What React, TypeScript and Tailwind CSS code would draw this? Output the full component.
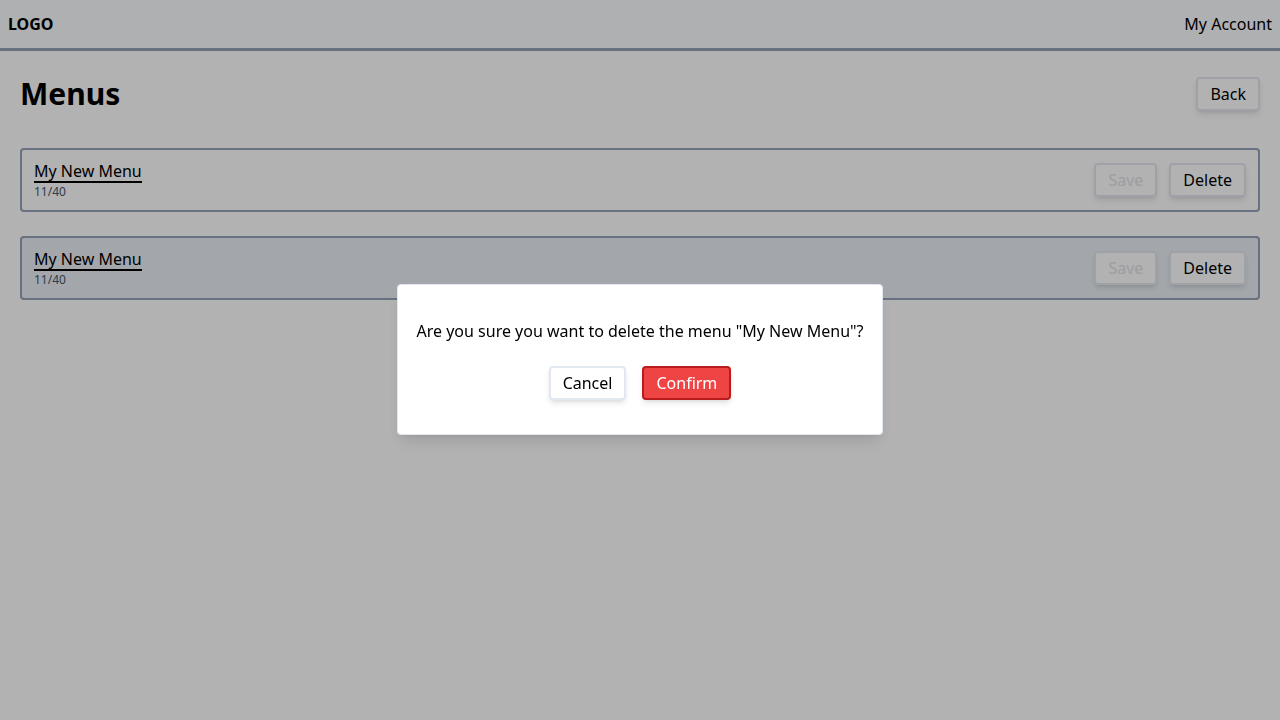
const menus = [
  { name: "My New Menu", count: "11/40", hovered: false },
  { name: "My New Menu", count: "11/40", hovered: true },
];

function Button({ children, disabled }: { children: React.ReactNode; disabled?: boolean }) {
  return (
    <button
      className={
        disabled
          ? "px-3 py-[3px] border-2 border-[#e2e8f0] rounded bg-white text-[#e0e2e6] shadow-md leading-6"
          : "px-3 py-[3px] border-2 border-[#e2e8f0] rounded bg-white text-black shadow-md leading-6"
      }
    >
      {children}
    </button>
  );
}

export default function App() {
  return (
    <div className="min-h-[720px] bg-white text-black font-['Noto_Sans',sans-serif] relative">
      <header className="h-[51px] flex items-center justify-between px-2 bg-[#fbfcfe] border-b-[3px] border-[#94a3b8]">
        <span className="font-bold text-base">LOGO</span>
        <span className="text-base">My Account</span>
      </header>

      <main className="px-5 pt-[25px]">
        <div className="flex items-center justify-between">
          <h1 className="text-3xl leading-9 font-bold">Menus</h1>
          <Button>Back</Button>
        </div>

        <div className="mt-9 space-y-6">
          {menus.map((menu, i) => (
            <div
              key={i}
              className={
                menu.hovered
                  ? "flex items-center justify-between border-2 border-[#94a3b8] rounded px-3 py-[10px] bg-[#eaf0f5]"
                  : "flex items-center justify-between border-2 border-[#94a3b8] rounded px-3 py-[10px]"
              }
            >
              <div className="flex flex-col items-start">
                <span className="inline-block leading-5 border-b-2 border-black pt-px">{menu.name}</span>
                <span className="text-xs leading-4 pt-px text-[#475569]">{menu.count}</span>
              </div>
              <div className="flex items-center gap-3">
                <Button disabled>Save</Button>
                <Button>Delete</Button>
              </div>
            </div>
          ))}
        </div>
      </main>

      <div className="fixed inset-0 bg-black/30 flex justify-center items-start pt-[284px]">
        <div className="w-[486px] bg-white rounded shadow-lg px-5 pt-[34px] pb-[34px] flex flex-col items-center border border-[#e2e8f0]">
          <p className="text-base leading-6 whitespace-nowrap">Are you sure you want to delete the menu "My New Menu"?</p>
          <div className="mt-[23px] flex gap-4">
            <button className="px-3 py-[3px] border-2 border-[#e2e8f0] rounded bg-white shadow-md leading-6">
              Cancel
            </button>
            <button className="px-3 py-[3px] border-2 border-[#b91c1c] rounded bg-[#ef4444] text-white shadow-md leading-6">
              Confirm
            </button>
          </div>
        </div>
      </div>
    </div>
  );
}
